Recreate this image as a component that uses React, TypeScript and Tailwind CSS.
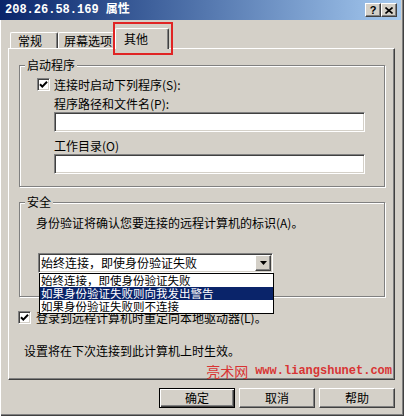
import React from "react";

const sunken =
  "border border-t-[#808080] border-l-[#808080] border-r-white border-b-white shadow-[inset_1px_1px_0_#404040,inset_-1px_-1px_0_#d4d0c8]";
const raised =
  "border border-t-white border-l-white border-r-[#404040] border-b-[#404040] shadow-[inset_-1px_-1px_0_#808080]";
const etched = "border border-[#808080] shadow-[inset_1px_1px_0_#fff,1px_1px_0_#fff]";

const CheckBox: React.FC = () => (
  <div className={`w-[13px] h-[13px] bg-white flex items-center justify-center ${sunken}`}>
    <svg width="9" height="9" viewBox="0 0 9 9">
      <path d="M1 4.2 L3.3 6.6 L8 1.8" fill="none" stroke="#000" strokeWidth="2" />
    </svg>
  </div>
);

const GroupLabel: React.FC<{ text: string }> = ({ text }) => (
  <span className="-mt-[8px] ml-[5px] px-[2px] self-start bg-[#d4d0c8] leading-[14px]">{text}</span>
);

const options = ["始终连接，即使身份验证失败", "如果身份验证失败则向我发出警告", "如果身份验证失败则不连接"];

export default function App() {
  return (
    <div className="relative w-[404px] h-[416px] overflow-hidden bg-[#d4d0c8] text-[12px] text-black font-['Noto_Sans_CJK_SC',sans-serif] shadow-[inset_1px_0_0_#fff,inset_-1px_-1px_0_#404040,inset_-2px_-2px_0_#808080] flex flex-col">
      {/* title bar */}
      <div className="w-[401px] h-[20px] flex items-center pl-[5px] pr-[4px] bg-gradient-to-r from-[#0a246a] to-[#a6caf0]">
        <span className="flex-1 text-white font-bold font-['Liberation_Mono','Noto_Sans_CJK_SC',monospace] leading-[14px]">
          208.26.58.169 属性
        </span>
        <div className={`w-[16px] h-[14px] bg-[#d4d0c8] flex items-center justify-center font-bold text-[11px] leading-none font-['Liberation_Sans',sans-serif] ${raised}`}>
          ?
        </div>
        <div className={`w-[16px] h-[14px] bg-[#d4d0c8] flex items-center justify-center ${raised}`}>
          <svg width="8" height="7" viewBox="0 0 8 7">
            <path d="M0.5 0.5 L7.5 6.5 M7.5 0.5 L0.5 6.5" stroke="#000" strokeWidth="1.6" />
          </svg>
        </div>
      </div>

      {/* tabs */}
      <div className="relative mt-[8px] ml-[10px] h-[20px] flex items-end">
        <div className="w-[48px] h-[16px] pl-[7px] pt-[1px] leading-[14px] border-l border-t border-r border-l-white border-t-white border-r-[#404040] rounded-tl-[2px] rounded-tr-[2px] shadow-[inset_-1px_0_0_#808080]">
          常规
        </div>
        <div className="w-[59px] h-[16px] pl-[5px] pt-[1px] leading-[14px] border-l border-t border-r border-l-white border-t-white border-r-[#404040] rounded-tl-[2px] rounded-tr-[2px] shadow-[inset_-1px_0_0_#808080]">
          屏幕选项
        </div>
        <div className="relative z-10 -ml-[2px] -mb-[1px] w-[54px] h-[21px] pl-[8px] pt-[3px] leading-[14px] bg-[#d4d0c8] border-l border-t border-r border-l-white border-t-white border-r-[#404040] rounded-tl-[2px] rounded-tr-[2px] shadow-[inset_-1px_0_0_#808080]">
          其他
        </div>
        <div className="absolute z-20 left-[103px] -top-[6px] w-[60px] h-[33px] border-2 border-[#e02424]" />
      </div>

      {/* panel */}
      <div className="ml-[8px] w-[387px] h-[332px] flex flex-col border border-t-white border-l-white border-r-[#404040] border-b-[#404040] shadow-[inset_-1px_-1px_0_#808080]">
        {/* group: 启动程序 */}
        <div className={`mt-[16px] ml-[10px] w-[366px] flex flex-col pb-[12px] ${etched}`}>
          <GroupLabel text="启动程序" />
          <div className="mt-[6px] ml-[17px] h-[13px] flex items-center gap-[4px]">
            <CheckBox />
            <span className="leading-[14px]">连接时启动下列程序(S):</span>
          </div>
          <span className="mt-[6px] ml-[34px] leading-[14px]">程序路径和文件名(P):</span>
          <div className={`mt-[1px] ml-[34px] w-[311px] h-[20px] bg-white ${sunken}`} />
          <span className="mt-[7px] ml-[34px] leading-[14px]">工作目录(O)</span>
          <div className={`mt-[1px] ml-[34px] w-[311px] h-[20px] bg-white ${sunken}`} />
        </div>

        {/* group: 安全 */}
        <div className={`mt-[15px] ml-[10px] w-[366px] flex flex-col pb-[23px] ${etched}`}>
          <GroupLabel text="安全" />
          <span className="mt-[7px] ml-[16px] leading-[14px]">身份验证将确认您要连接的远程计算机的标识(A)。</span>
          <div className={`relative mt-[23px] ml-[18px] w-[235px] h-[20px] bg-white flex items-center ${sunken}`}>
            <span className="flex-1 pl-[2px] leading-[14px]">{options[0]}</span>
            <div className={`w-[16px] h-[16px] mr-[1px] bg-[#d4d0c8] flex items-center justify-center ${raised}`}>
              <svg width="7" height="4" viewBox="0 0 7 4">
                <polygon points="0,0 7,0 3.5,4" fill="#000" />
              </svg>
            </div>
            <div className="absolute z-20 left-0 top-[19px] w-[235px] bg-white border border-black flex flex-col">
              {options.map((o, i) => (
                <div
                  key={o}
                  className={`h-[13px] pl-[1px] text-[11.5px] leading-[13px] whitespace-nowrap ${i === 1 ? "bg-[#0a246a] text-white" : ""}`}
                >
                  {o}
                </div>
              ))}
            </div>
          </div>
        </div>

        <div className="mt-[14px] ml-[9px] h-[13px] flex items-center gap-[5px]">
          <CheckBox />
          <span className="leading-[14px]">登录到远程计算机时重定向本地驱动器(L)。</span>
        </div>
        <span className="mt-[20px] ml-[15px] leading-[14px]">设置将在下次连接到此计算机上时生效。</span>

        <div className="mt-auto mb-0 mr-[2px] self-end flex items-end gap-[7px] text-[#d83434] leading-[16px]">
          <span className="text-[14px]">亮术网</span>
          <span className="font-['Liberation_Mono',monospace] text-[12px] font-bold">www.liangshunet.com</span>
        </div>
      </div>

      {/* buttons */}
      <div className="mt-[8px] pr-[9px] flex justify-end gap-[4px]">
        <div className="w-[76px] h-[20px] flex items-center justify-center border border-black shadow-[inset_1px_1px_0_#fff,inset_-1px_-1px_0_#404040,inset_-2px_-2px_0_#808080] leading-[14px]">
          确定
        </div>
        <div className={`w-[76px] h-[20px] flex items-center justify-center leading-[14px] ${raised}`}>取消</div>
        <div className={`w-[76px] h-[20px] flex items-center justify-center leading-[14px] ${raised}`}>帮助</div>
      </div>
    </div>
  );
}
